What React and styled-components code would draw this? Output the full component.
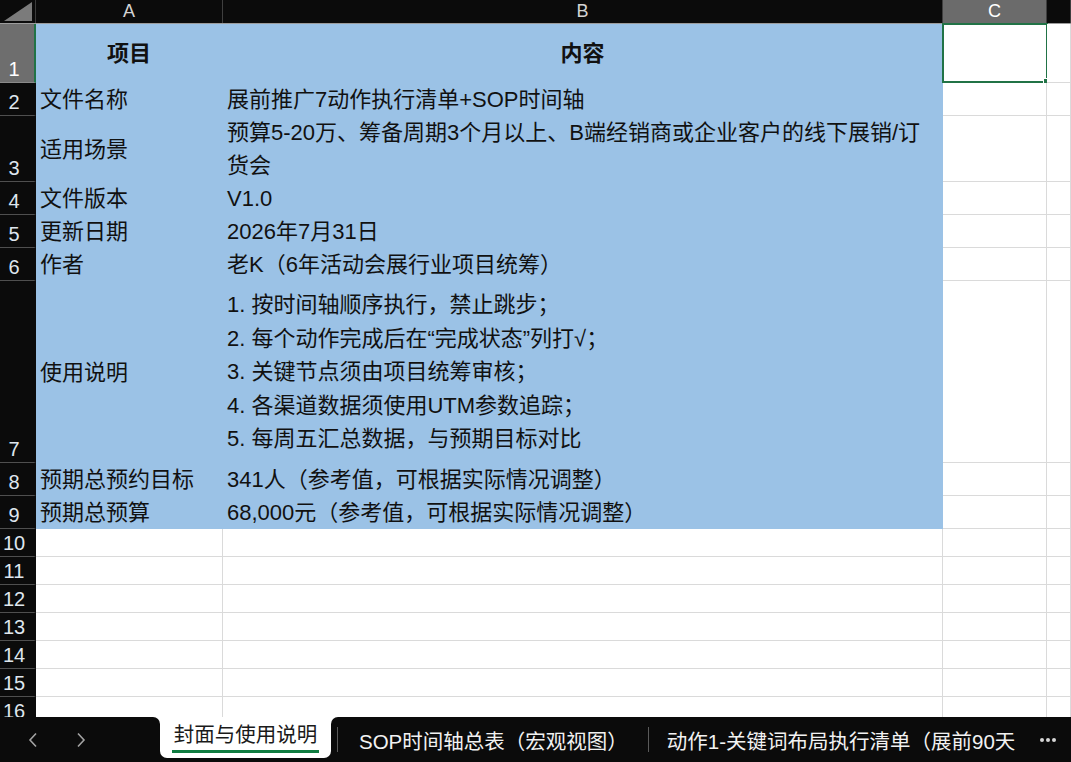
import React from 'react';
import styled, { createGlobalStyle } from 'styled-components';

const GlobalStyle = createGlobalStyle`
    html, body {
        margin: 0;
        padding: 0;
        background: #ffffff;
        overflow: hidden;
    }
    body {
        font-family: "Liberation Sans", "Noto Sans CJK SC", sans-serif;
    }
`

const COLS = { head: 36, a: 187, b: 720, c: 104 };

const rows = [
    { n: 1, h: 59, a: '项目', b: '内容', bold: true },
    { n: 2, h: 33, a: '文件名称', b: ['展前推广7动作执行清单+SOP时间轴'] },
    { n: 3, h: 66, a: '适用场景', b: ['预算5-20万、筹备周期3个月以上、B端经销商或企业客户的线下展销/订', '货会'] },
    { n: 4, h: 33, a: '文件版本', b: ['V1.0'] },
    { n: 5, h: 33, a: '更新日期', b: ['2026年7月31日'] },
    { n: 6, h: 33, a: '作者', b: ['老K（6年活动会展行业项目统筹）'] },
    {
        n: 7, h: 182, a: '使用说明', b: [
            '1. 按时间轴顺序执行，禁止跳步；',
            '2. 每个动作完成后在“完成状态”列打√；',
            '3. 关键节点须由项目统筹审核；',
            '4. 各渠道数据须使用UTM参数追踪；',
            '5. 每周五汇总数据，与预期目标对比',
        ]
    },
    { n: 8, h: 33, a: '预期总预约目标', b: ['341人（参考值，可根据实际情况调整）'] },
    { n: 9, h: 33, a: '预期总预算', b: ['68,000元（参考值，可根据实际情况调整）'] },
];

const emptyRows = [10, 11, 12, 13, 14, 15, 16];

const App = () => {
    return (
        <>
            <GlobalStyle />
            <Window>
                <Sheet>
                    <HeaderRow>
                        <Corner><CornerTriangle /></Corner>
                        <ColHeader $w={COLS.a}>A</ColHeader>
                        <ColHeader $w={COLS.b}>B</ColHeader>
                        <ColHeader $w={COLS.c} $selected>C</ColHeader>
                        <ColHeader $grow />
                    </HeaderRow>

                    {rows.map(r => (
                        <Row key={r.n} $h={r.h}>
                            <RowHeader $selected={r.n === 1}>{r.n}</RowHeader>
                            <Cell $w={COLS.a} $fill $center={r.bold} $bold={r.bold}>{r.a}</Cell>
                            <Cell $w={COLS.b} $fill $center={r.bold} $bold={r.bold} $multi={r.n === 7}>
                                {r.bold ? r.b : r.b.map((line, i) => <Line key={i}>{line}</Line>)}
                            </Cell>
                            <Cell $w={COLS.c}>
                                {r.n === 1 && <Selection><FillHandle /></Selection>}
                            </Cell>
                            <Cell $grow />
                        </Row>
                    ))}

                    {emptyRows.map(n => (
                        <Row key={n} $h={28}>
                            <RowHeader>{n}</RowHeader>
                            <Cell $w={COLS.a} />
                            <Cell $w={COLS.b} />
                            <Cell $w={COLS.c} />
                            <Cell $grow />
                        </Row>
                    ))}
                </Sheet>

                <TabBar>
                    <NavArea>
                        <NavButton aria-label="previous">
                            <svg width="10" height="16" viewBox="0 0 10 16" fill="none">
                                <path d="M8 1.5 L2 8 L8 14.5" stroke="#a3a3a3" strokeWidth="1.6" />
                            </svg>
                        </NavButton>
                        <NavButton aria-label="next">
                            <svg width="10" height="16" viewBox="0 0 10 16" fill="none">
                                <path d="M2 1.5 L8 8 L2 14.5" stroke="#a3a3a3" strokeWidth="1.6" />
                            </svg>
                        </NavButton>
                    </NavArea>
                    <ActiveSlot>
                        <ActiveTab>
                            <ActiveLabel>封面与使用说明</ActiveLabel>
                        </ActiveTab>
                    </ActiveSlot>
                    <TabsRest>
                        <Divider />
                        <Tab>SOP时间轴总表（宏观视图）</Tab>
                        <Divider />
                        <Tab $clip>动作1-关键词布局执行清单（展前90天</Tab>
                        <More>
                            <Dot /><Dot /><Dot />
                        </More>
                    </TabsRest>
                </TabBar>
            </Window>
        </>
    )
}

export default App;

const Window = styled.div`
    width: 1071px;
    height: 762px;
    display: flex;
    flex-direction: column;
    overflow: hidden;
    background: #ffffff;
`

const Sheet = styled.div`
    flex: 1;
    overflow: hidden;
    display: flex;
    flex-direction: column;
`

const HeaderRow = styled.div`
    display: flex;
    height: 24px;
    flex: none;
    background: #0b0b0b;
    border-bottom: 1px solid #9c9c9c;
    box-sizing: border-box;
`

const Corner = styled.div`
    width: ${COLS.head}px;
    flex: none;
    position: relative;
    border-right: 1px solid #3c3c3c;
    box-sizing: border-box;
`

const CornerTriangle = styled.div`
    position: absolute;
    right: 3px;
    bottom: 2px;
    width: 0;
    height: 0;
    border-left: 28px solid transparent;
    border-bottom: 19px solid #7b7b7b;
`

const ColHeader = styled.div`
    width: ${p => p.$grow ? 'auto' : `${p.$w}px`};
    flex: ${p => p.$grow ? '1' : 'none'};
    box-sizing: border-box;
    border-right: 1px solid #3f3f3f;
    background: ${p => p.$selected ? '#6b6b6b' : 'transparent'};
    color: ${p => p.$selected ? '#ffffff' : '#d4d4d4'};
    font-size: 18px;
    line-height: 23px;
    text-align: center;
`

const Row = styled.div`
    display: flex;
    height: ${p => p.$h}px;
    flex: none;
`

const RowHeader = styled.div`
    width: ${COLS.head}px;
    flex: none;
    box-sizing: border-box;
    background: ${p => p.$selected ? '#6e6e6e' : '#0b0b0b'};
    border-bottom: 1px solid ${p => p.$selected ? '#8a8a8a' : '#4f4f4f'};
    border-right: 2px solid ${p => p.$selected ? '#217346' : '#0b0b0b'};
    color: ${p => p.$selected ? '#ffffff' : '#dfe6ee'};
    font-size: 20px;
    display: flex;
    align-items: flex-end;
    justify-content: center;
    padding-right: 6px;
    line-height: 25px;
`

const Cell = styled.div`
    width: ${p => p.$grow ? 'auto' : `${p.$w}px`};
    flex: ${p => p.$grow ? '1' : 'none'};
    box-sizing: border-box;
    position: relative;
    background: ${p => p.$fill ? '#9bc2e6' : '#ffffff'};
    border-right: 1px solid ${p => p.$fill ? '#9bc2e6' : '#dadada'};
    border-bottom: 1px solid ${p => p.$fill ? '#9bc2e6' : '#dadada'};
    color: #111111;
    font-size: 22px;
    font-weight: ${p => p.$bold ? 700 : 400};
    display: flex;
    flex-direction: column;
    justify-content: center;
    align-items: ${p => p.$center ? 'center' : 'flex-start'};
    padding-left: ${p => p.$center ? '0' : '4px'};
    padding-top: 1px;
    white-space: nowrap;
    overflow: ${p => p.$fill ? 'hidden' : 'visible'};
    line-height: ${p => p.$multi ? '33.6px' : '33px'};
`

const Line = styled.div`
    white-space: nowrap;
`

const Selection = styled.div`
    position: absolute;
    left: -1px;
    top: -1px;
    right: -2px;
    bottom: -1px;
    border: 2px solid #217346;
`

const FillHandle = styled.div`
    position: absolute;
    right: -5px;
    bottom: -5px;
    width: 6px;
    height: 6px;
    background: #217346;
    border: 1px solid #ffffff;
`

const TabBar = styled.div`
    height: 45px;
    flex: none;
    display: flex;
    background: #ffffff;
`

const NavArea = styled.div`
    width: 160px;
    flex: none;
    background: #0b0b0b;
    border-top-right-radius: 7px;
    display: flex;
    align-items: center;
    padding-left: 28px;
    gap: 38px;
    box-sizing: border-box;
`

const NavButton = styled.div`
    width: 10px;
    height: 16px;
    display: flex;
    align-items: center;
    justify-content: center;
`

const ActiveSlot = styled.div`
    width: 171px;
    flex: none;
    background: #0b0b0b;
    display: flex;
`

const ActiveTab = styled.div`
    flex: 1;
    height: 41px;
    background: #ffffff;
    border-bottom-left-radius: 7px;
    border-bottom-right-radius: 7px;
    display: flex;
    justify-content: center;
    padding-top: 4px;
    box-sizing: border-box;
`

const ActiveLabel = styled.div`
    font-size: 20.5px;
    line-height: 28px;
    color: #1a1a1a;
    height: 32px;
    border-bottom: 3px solid #107c41;
    box-sizing: border-box;
    padding: 0 2px;
`

const TabsRest = styled.div`
    flex: 1;
    min-width: 0;
    background: #0b0b0b;
    border-top-left-radius: 7px;
    display: flex;
    align-items: center;
    padding-left: 6px;
    overflow: hidden;
`

const Divider = styled.div`
    width: 1px;
    height: 25px;
    background: #5a5a5a;
    flex: none;
`

const Tab = styled.div`
    font-size: 20.5px;
    color: #f2f2f2;
    white-space: nowrap;
    padding: 0 ${p => p.$clip ? '0' : '20px'} 0 ${p => p.$clip ? '18px' : '21px'};
    flex: ${p => p.$clip ? '1' : 'none'};
    overflow: hidden;
    min-width: 0;
`

const More = styled.div`
    flex: none;
    width: 38px;
    display: flex;
    align-items: center;
    justify-content: center;
    gap: 2px;
    padding-right: 4px;
`

const Dot = styled.span`
    width: 4px;
    height: 4px;
    border-radius: 50%;
    background: #d6d6d6;
`
